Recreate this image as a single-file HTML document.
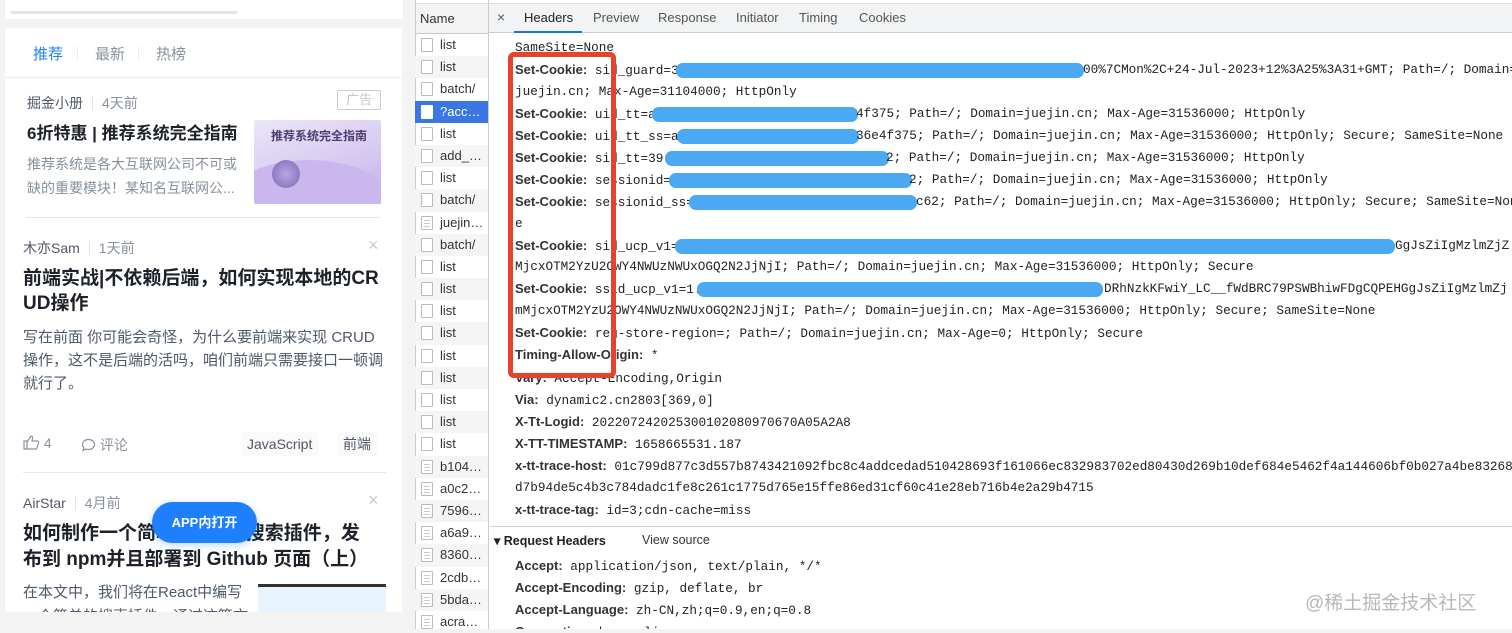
<!DOCTYPE html>
<html><head><meta charset="utf-8"><style>
*{margin:0;padding:0;box-sizing:border-box}
body{width:1512px;height:629px;overflow:hidden;background:#f3f3f3;position:relative;font-family:"Liberation Sans","Noto Sans CJK SC",sans-serif;color:#333}
.a{position:absolute;white-space:nowrap}
.card{position:absolute;left:5px;top:28px;width:397px;height:584px;background:#fff;overflow:hidden}
.cn{font-family:"Liberation Sans","Noto Sans CJK SC",sans-serif}
.meta{font-size:14px;color:#515767}
.sep{display:inline-block;width:1px;height:14px;background:#e4e6eb;margin:0 9px;vertical-align:-2px}
.tt{font-size:18px;font-weight:bold;color:#1d2129;line-height:25px}
.ds{font-size:14px;color:#86909c;line-height:23.5px}
.dt{position:absolute;left:415px;top:0;width:1097px;height:629px;background:#fff;border-left:1px solid #cbcdd1}
.nm{position:absolute;left:415px;top:34px;width:73px}
.row{height:22.2px;font-size:13px;color:#333;position:relative;padding-left:25px;line-height:22px;white-space:nowrap;overflow:hidden}
.row i{position:absolute;left:6px;top:4px;width:12px;height:14px;border:1px solid #bbb;border-radius:1px;background:#fff}
.row.d i:after{content:"";position:absolute;left:2px;top:3px;width:6px;height:1px;background:#ccc;box-shadow:0 3px 0 #ccc,0 6px 0 #ccc}
.l{position:absolute;white-space:nowrap;font-size:12.7px;line-height:16px;font-family:"Liberation Mono",monospace;color:#222}
.l b{font-family:"Liberation Sans",sans-serif;font-size:13px;color:#333;font-weight:bold}
.bar{position:absolute;height:15px;border-radius:7px;background:#4aa9f2}
</style></head><body>
<!-- left page -->
<div class="a" style="left:5px;top:0;width:398px;height:19px;background:#fff"></div>
<div class="a" style="left:10px;top:11px;width:228px;height:3px;background:#e5e5e5;border-radius:2px"></div>
<div class="card">
  <div class="a cn" style="left:28px;top:15px;font-size:15px;color:#1e80ff">推荐</div>
  <div class="a" style="left:72px;top:18px;width:1px;height:14px;background:#eee"></div>
  <div class="a cn" style="left:90px;top:15px;font-size:15px;color:#8a919f">最新</div>
  <div class="a" style="left:133px;top:18px;width:1px;height:14px;background:#eee"></div>
  <div class="a cn" style="left:151px;top:15px;font-size:15px;color:#8a919f">热榜</div>
  <div class="a" style="left:0;top:48px;width:397px;height:3px;background:#f7f7f7"></div>

  <div class="a meta" style="left:22px;top:65px">掘金小册<span class="sep"></span><span style="color:#8a919f">4天前</span></div>
  <div class="a" style="left:332px;top:62px;width:44px;height:20px;border:1px solid #ccc;border-radius:2px;color:#c2c8d1;font-size:13px;text-align:center;line-height:18px">广告</div>
  <div class="a tt" style="left:22px;top:93px;font-size:17px">6折特惠 | 推荐系统完全指南</div>
  <div class="a ds" style="left:22px;top:125px">推荐系统是各大互联网公司不可或<br>缺的重要模块！某知名互联网公...</div>
  <div class="a" style="left:249px;top:92px;width:127px;height:84px;background:linear-gradient(160deg,#ece6f8,#d5c8f0 60%,#c0aee8);border-radius:2px;overflow:hidden">
    <div class="a" style="left:-30px;top:40px;width:170px;height:90px;border-radius:50%;background:#c9b7ee"></div>
    <div class="a" style="left:18px;top:40px;width:28px;height:28px;border-radius:50%;background:radial-gradient(#b8a6e0,#7d67b8)"></div>
    <div class="a" style="left:17px;top:7px;font-size:12px;font-weight:bold;color:#4b3d6d">推荐系统完全指南</div>
  </div>
  <div class="a" style="left:21px;top:189px;width:355px;height:1px;background:#e5e6eb"></div>

  <div class="a meta" style="left:18px;top:210px">木亦Sam<span class="sep"></span><span style="color:#8a919f">1天前</span></div>
  <div class="a" style="left:363px;top:207px;font-size:18px;color:#ccc">×</div>
  <div class="a tt" style="left:18px;top:238px;font-size:19px">前端实战|不依赖后端，如何实现本地的CR<br>UD操作</div>
  <div class="a ds" style="left:18px;top:298px;color:#4e5969;font-size:15px;line-height:23px">写在前面 你可能会奇怪，为什么要前端来实现 CRUD<br>操作，这不是后端的活吗，咱们前端只需要接口一顿调<br>就行了。</div>
  <div class="a" style="left:18px;top:407px;font-size:14px;color:#8a919f">
    <svg width="17" height="15" viewBox="0 0 17 15" style="vertical-align:-2px"><path d="M1 6h3v8H1zM4 7l4-6c1 0 2 1 1.5 3L9 6h5c1 0 2 1 1.5 2l-1.5 5c-.3.7-1 1-1.5 1H4" fill="none" stroke="#8a919f" stroke-width="1.2"/></svg> 4</div>
  <div class="a" style="left:76px;top:407px;font-size:14px;color:#8a919f">
    <svg width="15" height="14" viewBox="0 0 15 14" style="vertical-align:-2px"><path d="M7.5 1.5c3.5 0 6 2.2 6 5s-2.5 5-6 5c-1 0-2-.2-2.8-.5L2 12.5l.8-2.8C1.9 8.8 1.5 7.7 1.5 6.5c0-2.8 2.5-5 6-5z" fill="none" stroke="#8a919f" stroke-width="1.2"/></svg> 评论</div>
  <div class="a" style="left:236px;top:404px;height:24px;padding:0 6px;background:#fafafa;font-size:14px;color:#515767;line-height:24px">JavaScript</div>
  <div class="a" style="left:332px;top:404px;height:24px;padding:0 6px;background:#fafafa;font-size:14px;color:#515767;line-height:24px">前端</div>
  <div class="a" style="left:18px;top:444px;width:363px;height:1px;background:#e5e6eb"></div>

  <div class="a meta" style="left:18px;top:465px">AirStar<span class="sep"></span><span style="color:#8a919f">4月前</span></div>
  <div class="a" style="left:363px;top:462px;font-size:18px;color:#ccc">×</div>
  <div class="a tt" style="left:18px;top:493px;font-size:19px;line-height:26px">如何制作一个简单的React搜索插件，发<br>布到 npm并且部署到 Github 页面（上）</div>
  <div class="a ds" style="left:18px;top:553px;color:#4e5969;font-size:15px">在本文中，我们将在React中编写<br>一个简单的搜索插件，通过这篇文</div>
  <div class="a" style="left:253px;top:556px;width:128px;height:3px;background:#333"></div>
  <div class="a" style="left:253px;top:559px;width:128px;height:30px;background:#e8f4fd"></div>
</div>
<div class="a" style="left:152px;top:502px;width:105px;height:41px;border-radius:21px;background:#1e80ff;color:#fff;font-size:13px;font-weight:bold;text-align:center;line-height:41px;box-shadow:0 2px 8px rgba(30,128,255,.3)">APP内打开</div>

<!-- devtools -->
<div class="dt"></div>
<div class="a" style="left:416px;top:0;width:1096px;height:4px;background:#fff;border-bottom:1px solid #ddd"></div>
<div class="a" style="left:416px;top:4px;width:72px;height:30px;background:#f3f3f3;border-bottom:1px solid #cbcdd1;font-size:13px;line-height:30px;padding-left:4px;color:#333">Name</div>
<div class="a" style="left:488px;top:0;width:1px;height:629px;background:#cbcdd1"></div>
<div class="a" style="left:489px;top:4px;width:1023px;height:29px;background:#f1f3f4;border-bottom:1px solid #cbcdd1"></div>
<div class="a" style="left:497px;top:9px;font-size:14px;color:#555">×</div>
<div class="a" style="left:524px;top:10px;font-size:13px;color:#222">Headers</div>
<div class="a" style="left:514px;top:31px;width:68px;height:2px;background:#1a73e8"></div>
<div class="a" style="left:593px;top:10px;font-size:13px;color:#555">Preview</div>
<div class="a" style="left:658px;top:10px;font-size:13px;color:#555">Response</div>
<div class="a" style="left:736px;top:10px;font-size:13px;color:#555">Initiator</div>
<div class="a" style="left:799px;top:10px;font-size:13px;color:#555">Timing</div>
<div class="a" style="left:859px;top:10px;font-size:13px;color:#555">Cookies</div>

<div class="nm">
<div class="row"><i></i>list</div>
<div class="row" style="background:#f5f5f5"><i></i>list</div>
<div class="row"><i></i>batch/</div>
<div class="row" style="background:#3a77e2;color:#fff"><i style="border-color:#fff"></i>?acc…</div>
<div class="row"><i></i>list</div>
<div class="row" style="background:#f5f5f5"><i></i>add_…</div>
<div class="row"><i></i>list</div>
<div class="row" style="background:#f5f5f5"><i></i>batch/</div>
<div class="row d"><i></i>juejin…</div>
<div class="row" style="background:#f5f5f5"><i></i>batch/</div>
<div class="row"><i></i>list</div>
<div class="row" style="background:#f5f5f5"><i></i>list</div>
<div class="row"><i></i>list</div>
<div class="row" style="background:#f5f5f5"><i></i>list</div>
<div class="row"><i></i>list</div>
<div class="row" style="background:#f5f5f5"><i></i>list</div>
<div class="row"><i></i>list</div>
<div class="row" style="background:#f5f5f5"><i></i>list</div>
<div class="row"><i></i>list</div>
<div class="row d" style="background:#f5f5f5"><i></i>b104…</div>
<div class="row d"><i></i>a0c2…</div>
<div class="row d" style="background:#f5f5f5"><i></i>7596…</div>
<div class="row d"><i></i>a6a9…</div>
<div class="row d" style="background:#f5f5f5"><i></i>8360…</div>
<div class="row d"><i></i>2cdb…</div>
<div class="row d" style="background:#f5f5f5"><i></i>5bda…</div>
<div class="row d"><i></i>acra…</div>
</div>

<div class="a" style="left:490px;top:34px;width:1022px;height:595px;overflow:hidden">
<div style="position:absolute;left:-490px;top:-34px;width:1512px;height:629px">
<div class="l" style="left:515px;top:40px">SameSite=None</div>
<div class="l" style="left:515px;top:62px"><b>Set-Cookie:</b> sid_guard=3</div><div class="bar" style="left:676px;top:63px;width:408px"></div><div class="l" style="left:1083px;top:62px">00%7CMon%2C+24-Jul-2023+12%3A25%3A31+GMT; Path=/; Domain=</div>
<div class="l" style="left:515px;top:84px">juejin.cn; Max-Age=31104000; HttpOnly</div>
<div class="l" style="left:515px;top:106px"><b>Set-Cookie:</b> uid_tt=a</div><div class="bar" style="left:652px;top:107px;width:206px"></div><div class="l" style="left:856px;top:106px">4f375; Path=/; Domain=juejin.cn; Max-Age=31536000; HttpOnly</div>
<div class="l" style="left:515px;top:128px"><b>Set-Cookie:</b> uid_tt_ss=a</div><div class="bar" style="left:677px;top:129px;width:182px"></div><div class="l" style="left:856px;top:128px">36e4f375; Path=/; Domain=juejin.cn; Max-Age=31536000; HttpOnly; Secure; SameSite=None</div>
<div class="l" style="left:515px;top:150px"><b>Set-Cookie:</b> sid_tt=39</div><div class="bar" style="left:665px;top:151px;width:224px"></div><div class="l" style="left:886px;top:150px">2; Path=/; Domain=juejin.cn; Max-Age=31536000; HttpOnly</div>
<div class="l" style="left:515px;top:172px"><b>Set-Cookie:</b> sessionid=</div><div class="bar" style="left:669px;top:173px;width:243px"></div><div class="l" style="left:909px;top:172px">2; Path=/; Domain=juejin.cn; Max-Age=31536000; HttpOnly</div>
<div class="l" style="left:515px;top:194px"><b>Set-Cookie:</b> sessionid_ss=3</div><div class="bar" style="left:689px;top:195px;width:228px"></div><div class="l" style="left:916px;top:194px">c62; Path=/; Domain=juejin.cn; Max-Age=31536000; HttpOnly; Secure; SameSite=Non</div>
<div class="l" style="left:515px;top:216px">e</div>
<div class="l" style="left:515px;top:238px"><b>Set-Cookie:</b> sid_ucp_v1=</div><div class="bar" style="left:675px;top:239px;width:720px"></div><div class="l" style="left:1395px;top:238px">GgJsZiIgMzlmZjZ</div>
<div class="l" style="left:515px;top:259px">MjcxOTM2YzU2OWY4NWUzNWUxOGQ2N2JjNjI; Path=/; Domain=juejin.cn; Max-Age=31536000; HttpOnly; Secure</div>
<div class="l" style="left:515px;top:281px"><b>Set-Cookie:</b> ssid_ucp_v1=1.</div><div class="bar" style="left:697px;top:282px;width:406px"></div><div class="l" style="left:1104px;top:281px">DRhNzkKFwiY_LC__fWdBRC79PSWBhiwFDgCQPEHGgJsZiIgMzlmZj</div>
<div class="l" style="left:515px;top:303px">mMjcxOTM2YzU2OWY4NWUzNWUxOGQ2N2JjNjI; Path=/; Domain=juejin.cn; Max-Age=31536000; HttpOnly; Secure; SameSite=None</div>
<div class="l" style="left:515px;top:325px"><b>Set-Cookie:</b> reg-store-region=; Path=/; Domain=juejin.cn; Max-Age=0; HttpOnly; Secure</div>
<div class="l" style="left:515px;top:347px"><b>Timing-Allow-Origin:</b> *</div>
<div class="l" style="left:515px;top:370px"><b>Vary:</b> Accept-Encoding,Origin</div>
<div class="l" style="left:515px;top:392px"><b>Via:</b> dynamic2.cn2803[369,0]</div>
<div class="l" style="left:515px;top:414px"><b>X-Tt-Logid:</b> 202207242025300102080970670A05A2A8</div>
<div class="l" style="left:515px;top:436px"><b>X-TT-TIMESTAMP:</b> 1658665531.187</div>
<div class="l" style="left:515px;top:458px"><b>x-tt-trace-host:</b> 01c799d877c3d557b8743421092fbc8c4addcedad510428693f161066ec832983702ed80430d269b10def684e5462f4a144606bf0b027a4be83268</div>
<div class="l" style="left:515px;top:480px">d7b94de5c4b3c784dadc1fe8c261c1775d765e15ffe86ed31cf60c41e28eb716b4e2a29b4715</div>
<div class="l" style="left:515px;top:502px"><b>x-tt-trace-tag:</b> id=3;cdn-cache=miss</div>
<div class="a" style="left:489px;top:526px;width:1023px;height:1px;background:#d0d0d0"></div>
<div class="a" style="left:494px;top:533px;font-size:12.5px;font-weight:bold;color:#222">▾ Request Headers</div>
<div class="a" style="left:642px;top:533px;font-size:12.5px;color:#333">View source</div>
<div class="l" style="left:515px;top:558px"><b>Accept:</b> application/json, text/plain, */*</div>
<div class="l" style="left:515px;top:580px"><b>Accept-Encoding:</b> gzip, deflate, br</div>
<div class="l" style="left:515px;top:602px"><b>Accept-Language:</b> zh-CN,zh;q=0.9,en;q=0.8</div>
<div class="l" style="left:515px;top:624px"><b>Connection:</b> keep-alive</div>
<div class="a" style="left:508px;top:52px;width:108px;height:326px;border:5px solid #e8412c;border-radius:6px"></div>
<div class="a" style="left:1305px;top:588px;font-size:19px;color:#b8b8b8;font-family:'Liberation Sans','Noto Sans CJK SC',sans-serif">@稀土掘金技术社区</div>
</div></div>
</body></html>
